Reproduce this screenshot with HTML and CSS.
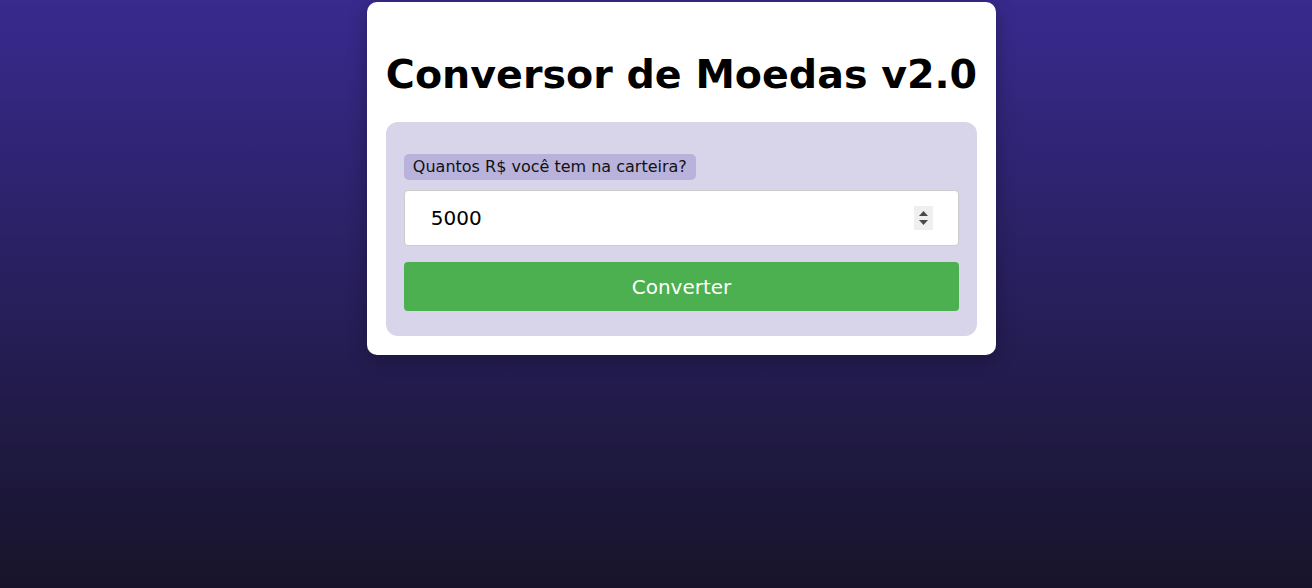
FILE: index.html
```html
<!DOCTYPE html>
<html lang="pt-BR">
<head>
<meta charset="utf-8">
<title>Conversor de Moedas v2.0</title>
<link rel="stylesheet" href="styles.css">
</head>
<body>
<div class="page">
  <main class="card">
    <h1 class="title">Conversor de Moedas v2.0</h1>
    <form class="panel" onsubmit="return false">
      <label class="field-label" for="valor">Quantos R$ você tem na carteira?</label>
      <div class="input-wrap">
        <input class="amount" id="valor" type="number" value="5000">
        <span class="spinner" aria-hidden="true">
          <svg width="19" height="24" viewBox="0 0 19 24"><path d="M5 10 L9.5 5 L14 10 Z" fill="#4a4a4a"/><path d="M5 14 L9.5 19 L14 14 Z" fill="#4a4a4a"/></svg>
        </span>
      </div>
      <button class="convert" type="submit">Converter</button>
    </form>
  </main>
</div>
</body>
</html>
```

FILE: styles.css
```css
html, body {
  margin: 0;
  height: 100%;
}
body {
  background: linear-gradient(to bottom, #382a8e 0%, #17142a 100%);
  font-family: "DejaVu Sans", Verdana, sans-serif;
}
.page {
  display: flex;
  justify-content: center;
  padding-top: 2px;
  padding-left: 51px;
}
.card {
  background: #ffffff;
  border-radius: 10px;
  padding: 19px 19px 19px;
  box-shadow: 0 4px 20px rgba(0, 0, 0, 0.3);
}
.title {
  margin: 30px 0 25px;
  font-size: 39.6px;
  font-weight: bold;
  color: #000;
  text-align: center;
  white-space: nowrap;
}
.panel {
  background: #d8d4e9;
  border-radius: 12px;
  padding: 32px 18px 25px;
  display: flex;
  flex-direction: column;
  align-items: flex-start;
}
.field-label {
  background: #b9b3dc;
  color: #111;
  font-size: 16px;
  padding: 3px 9px;
  border-radius: 5px;
  line-height: 20px;
}
.input-wrap {
  position: relative;
  align-self: stretch;
  margin-top: 10px;
}
.amount {
  box-sizing: border-box;
  display: block;
  width: 100%;
  height: 56px;
  border: 1px solid #cccccc;
  border-radius: 4px;
  background: #fff;
  padding: 0 26px;
  font-family: "DejaVu Sans", Verdana, sans-serif;
  font-size: 20px;
  color: #000;
  outline: none;
  -moz-appearance: textfield;
}
.amount::-webkit-inner-spin-button,
.amount::-webkit-outer-spin-button {
  -webkit-appearance: none;
  margin: 0;
}
.spinner {
  position: absolute;
  right: 26px;
  top: 16px;
  width: 19px;
  height: 24px;
  background: #efefef;
  display: block;
}
.spinner svg {
  display: block;
}
.convert {
  align-self: stretch;
  margin-top: 16px;
  height: 49px;
  border: none;
  border-radius: 4px;
  background: #4caf50;
  color: #fff;
  font-family: "DejaVu Sans", Verdana, sans-serif;
  font-size: 20px;
  cursor: pointer;
}
```
